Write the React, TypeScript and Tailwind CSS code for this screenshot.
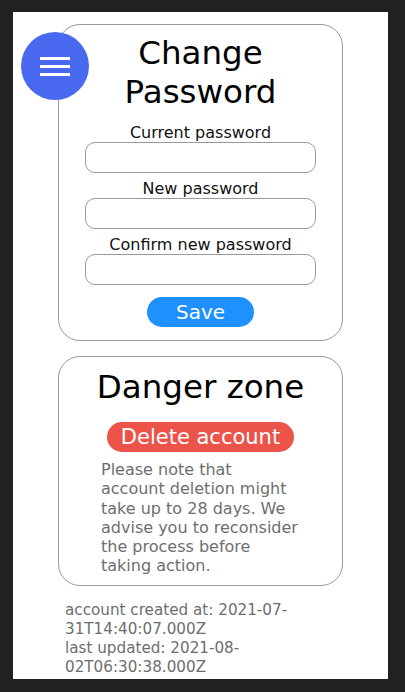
function Field({ label }: { label: string }) {
  return (
    <div className="flex flex-col items-center">
      <label className="text-[16px] leading-[19px] text-[#111]">{label}</label>
      <input
        type="password"
        className="w-[231px] h-[31px] rounded-[10px] border border-[#999] outline-none px-2"
      />
    </div>
  );
}

export default function App() {
  return (
    <div
      className="min-h-[692px] bg-[#212121] pl-[13px] pt-[12px]"
      style={{ fontFamily: "'DejaVu Sans', Inter, sans-serif" }}
    >
      <div className="relative w-[375px] h-[667px] bg-white overflow-hidden flex flex-col items-center">
        {/* floating menu button */}
        <button className="absolute left-[8px] top-[20px] w-[68px] h-[68px] rounded-full bg-[#4a69f1] flex flex-col items-center justify-center gap-[5px]">
          <span className="block w-[30px] h-[3px] bg-white" />
          <span className="block w-[30px] h-[3px] bg-white" />
          <span className="block w-[30px] h-[3px] bg-white" />
        </button>

        {/* change password */}
        <div className="mt-[12px] w-[285px] rounded-[22px] border border-[#999] flex flex-col items-center pt-[9px] pb-[13px]">
          <h1 className="text-[32.5px] leading-[39px] text-black text-center">
            Change
            <br />
            Password
          </h1>
          <div className="mt-[11px] flex flex-col gap-[6px]">
            <Field label="Current password" />
            <Field label="New password" />
            <Field label="Confirm new password" />
          </div>
          <button className="mt-[12px] w-[107px] h-[30px] rounded-full bg-[#1e90ff] text-white text-[20px] leading-[30px]">
            Save
          </button>
        </div>

        {/* danger zone */}
        <div className="mt-[15px] w-[285px] rounded-[22px] border border-[#999] flex flex-col items-center pt-[10px] pb-[9px]">
          <h2 className="text-[32.5px] leading-[40px] text-black">Danger zone</h2>
          <button className="mt-[15px] w-[187px] h-[30px] rounded-full bg-[#ec544a] text-white text-[21px] leading-[30px]">
            Delete account
          </button>
          <p className="self-start ml-[42px] mt-[8px] w-[197px] text-[16px] leading-[19.3px] text-[#6e6e6e]">
            Please note that account deletion might take up to 28 days. We
            advise you to reconsider the process before taking action.
          </p>
        </div>

        {/* timestamps */}
        <div className="self-start ml-[52px] mt-[15px] w-[240px] text-[15.2px] leading-[19px] text-[#6e6e6e]">
          <p>account created at: 2021-07-31T14:40:07.000Z</p>
          <p>last updated: 2021-08-02T06:30:38.000Z</p>
        </div>
      </div>
    </div>
  );
}
